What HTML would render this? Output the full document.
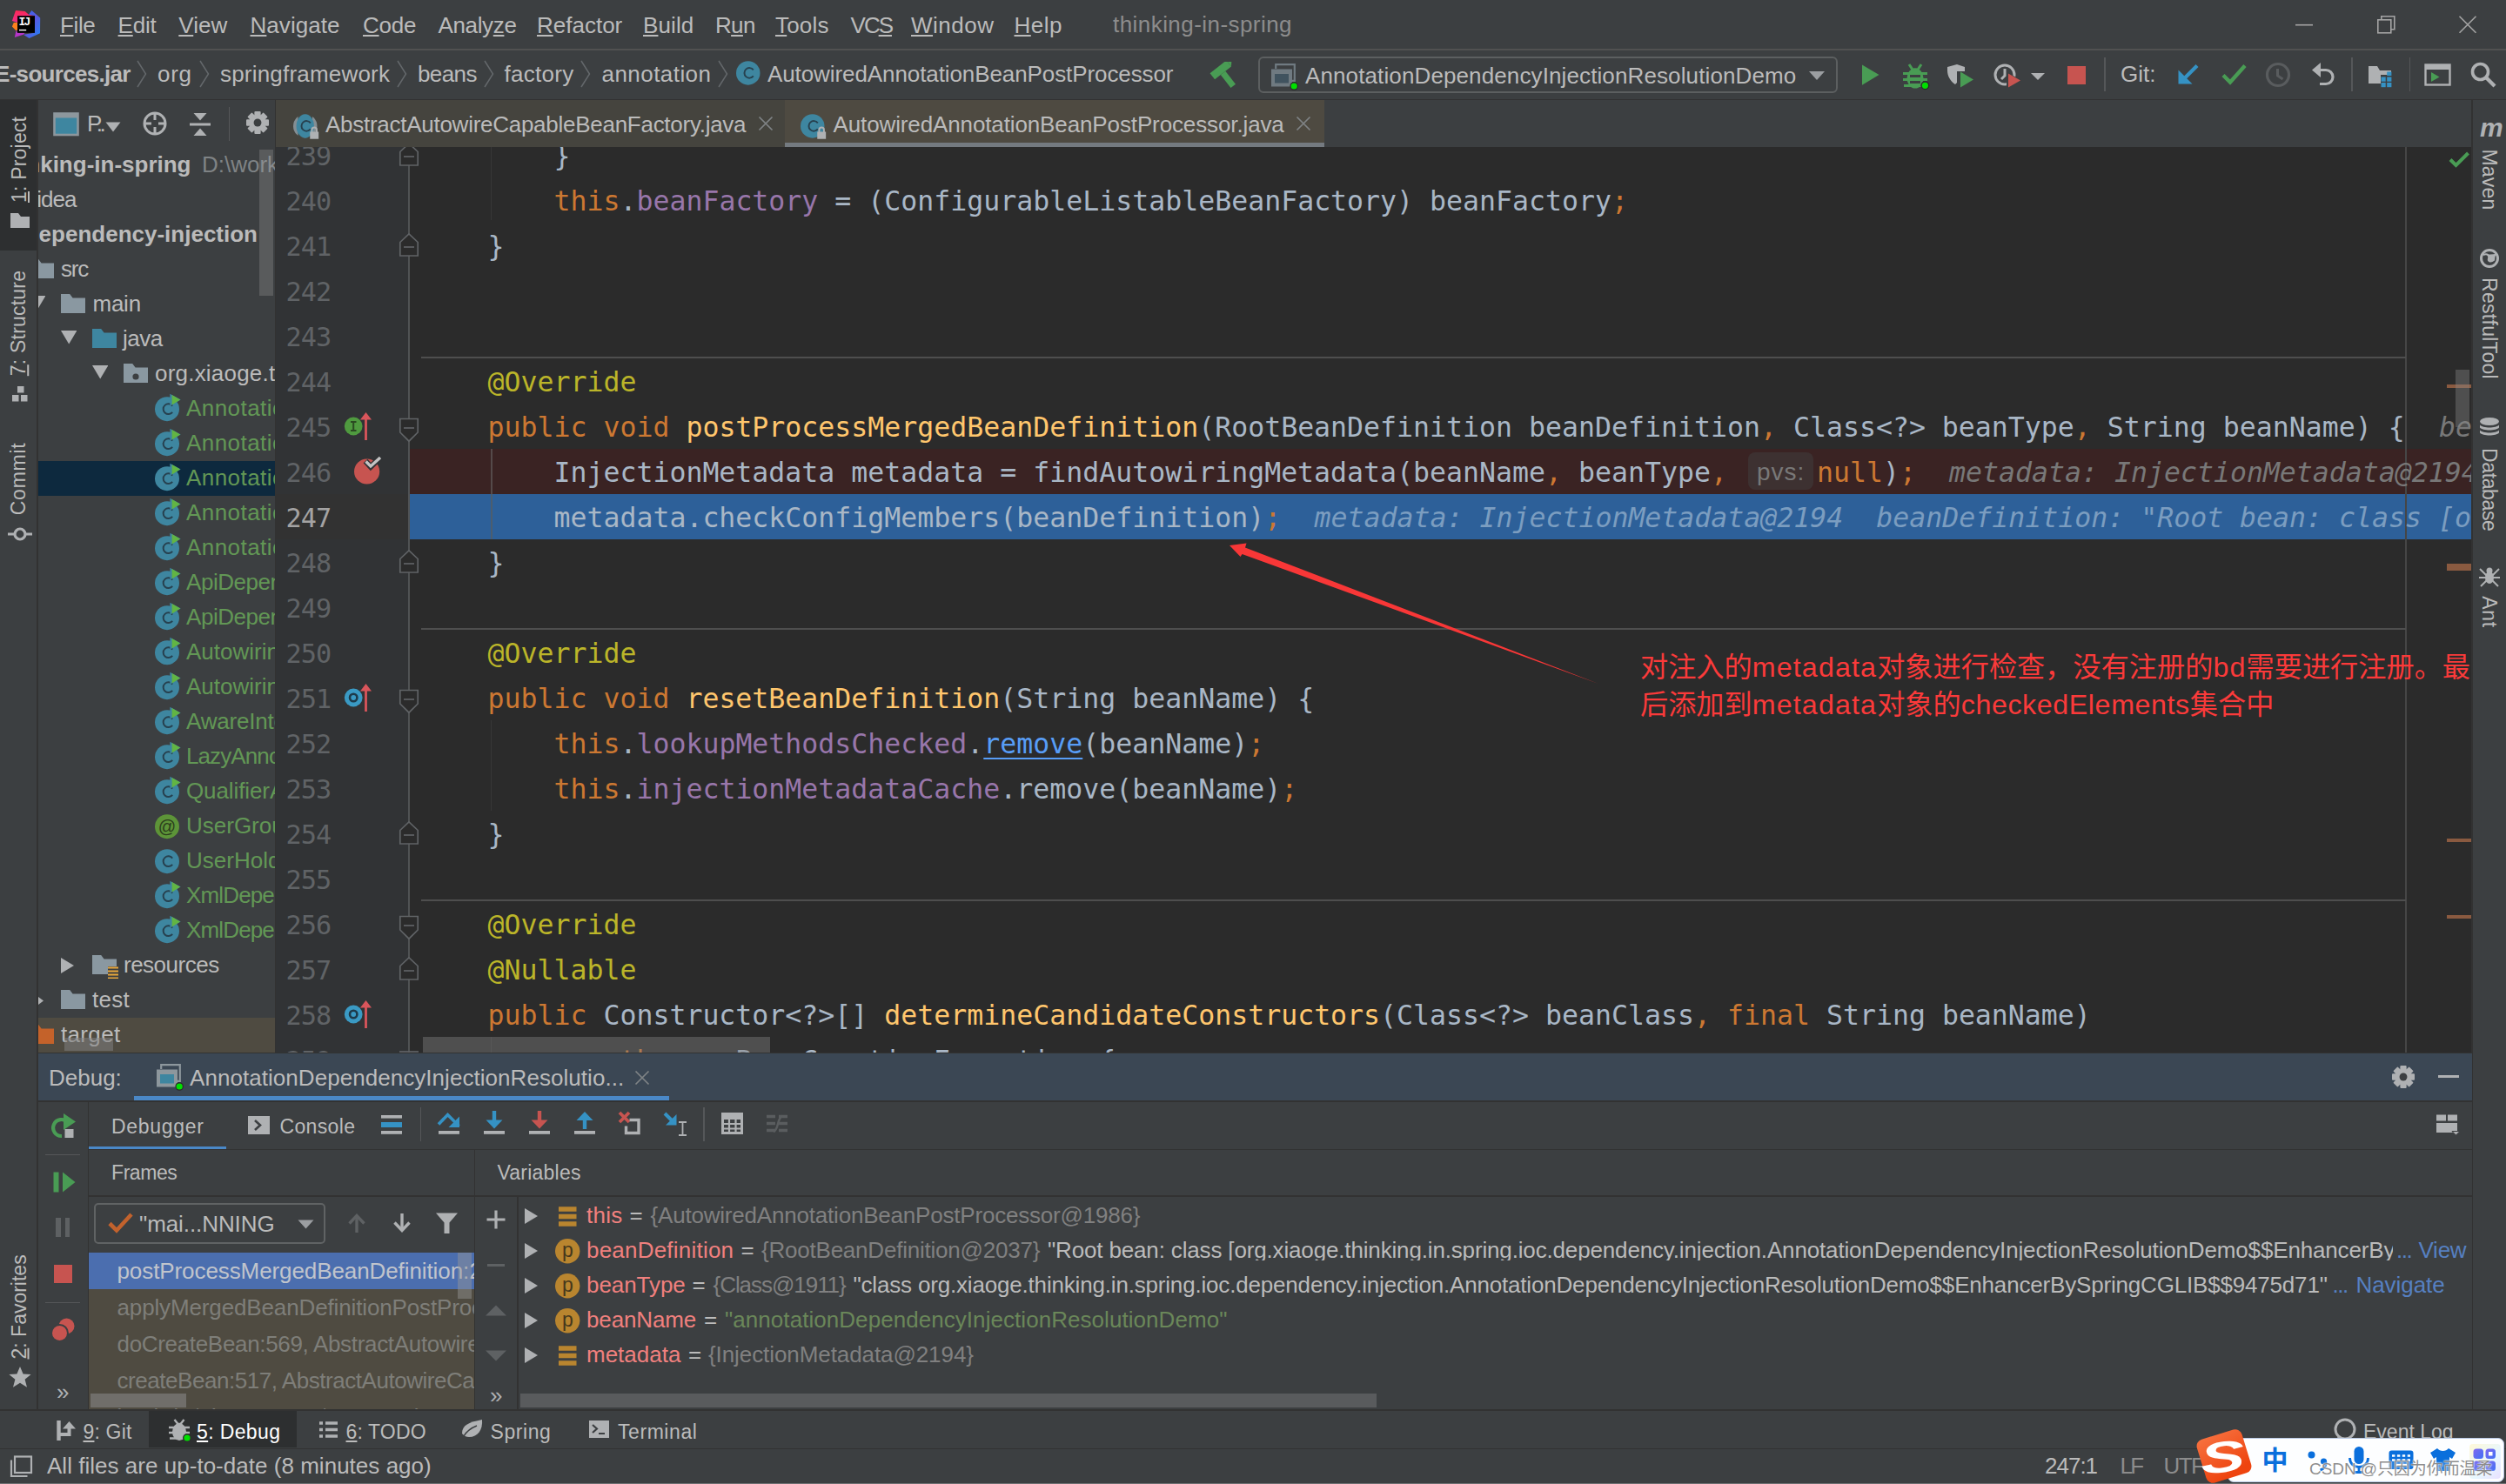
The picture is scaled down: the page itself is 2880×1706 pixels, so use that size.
<!DOCTYPE html>
<html lang="en"><head><meta charset="utf-8"><title>thinking-in-spring</title>
<style>
html,body{margin:0;padding:0}
body{width:2880px;height:1706px;overflow:hidden;background:#3c3f41;position:relative;font-family:"Liberation Sans","Noto Sans CJK SC",sans-serif}
div,svg{position:absolute}
.t{white-space:pre;line-height:1}
.ui{font-family:"Liberation Sans","Noto Sans CJK SC",sans-serif}
.uib{font-family:"Liberation Sans","Noto Sans CJK SC",sans-serif;font-weight:bold}
.mono{font-family:"DejaVu Sans Mono","Liberation Mono",monospace}
.monoi{font-family:"DejaVu Sans Mono","Liberation Mono",monospace;font-style:italic}
.cjk{font-family:"Liberation Sans","Noto Sans CJK SC",sans-serif}
.clip{overflow:hidden}
u{text-decoration-thickness:2px;text-underline-offset:2px}
</style></head>
<body>
<div style="left:0px;top:0px;width:2880px;height:57px;background:#3c3f41;"></div>
<div style="left:0px;top:56px;width:2880px;height:2px;background:#515151;"></div>
<svg style="left:12px;top:10px;" width="36" height="36" viewBox="12 10 36 36"><defs><linearGradient id="lb" x1="0" y1="0" x2="1" y2="1"><stop offset="0" stop-color="#2d6cf0"/><stop offset="0.500" stop-color="#5b57e0"/><stop offset="1" stop-color="#1f84f5"/></linearGradient>
<linearGradient id="lp" x1="0" y1="0" x2="0" y2="1"><stop offset="0" stop-color="#fe2857"/><stop offset="1" stop-color="#e8308a"/></linearGradient></defs>
<polygon points="18,12 28.700,12.900 33,16.800 40,18.200 20.100,25.900 13.900,24" fill="url(#lp)"/>
<polygon points="15.800,26.100 20.100,25.900 20.100,34.500 18.200,35 13.900,30.600" fill="#fc801d"/>
<polygon points="36.400,12 46.200,20.600 46,38.300 33.500,44 26.800,39.700 40,37.800 40,18.200 33,16.800" fill="url(#lb)"/>
<polygon points="18.600,34.800 20.100,37.800 28.700,37.800 26.800,39.700 16.800,43.100" fill="#b535c8"/>
<rect x="20.100" y="18.200" width="19.900" height="19.600" fill="#000"/>
<rect x="22" y="33.900" width="8.200" height="1.400" fill="#fff"/>
<text x="21.600" y="29" font-family="Liberation Mono,monospace" font-weight="bold" font-size="13" letter-spacing="-1.900" fill="#fff">IJ</text></svg>
<div class="t ui" style="top:16.19px;font-size:26px;color:#bbbbbb;left:69.00px;letter-spacing:-0.375px;"><u>F</u>ile</div>
<div class="t ui" style="top:16.19px;font-size:26px;color:#bbbbbb;left:135.60px;letter-spacing:-0.200px;"><u>E</u>dit</div>
<div class="t ui" style="top:16.19px;font-size:26px;color:#bbbbbb;left:205.30px;letter-spacing:0.050px;"><u>V</u>iew</div>
<div class="t ui" style="top:16.19px;font-size:26px;color:#bbbbbb;left:287.50px;letter-spacing:0.062px;"><u>N</u>avigate</div>
<div class="t ui" style="top:16.19px;font-size:26px;color:#bbbbbb;left:417.00px;letter-spacing:-0.250px;"><u>C</u>ode</div>
<div class="t ui" style="top:16.19px;font-size:26px;color:#bbbbbb;left:503.50px;letter-spacing:-0.357px;">Analy<u>z</u>e</div>
<div class="t ui" style="top:16.19px;font-size:26px;color:#bbbbbb;left:617.00px;letter-spacing:0.000px;"><u>R</u>efactor</div>
<div class="t ui" style="top:16.19px;font-size:26px;color:#bbbbbb;left:739.00px;letter-spacing:0.100px;"><u>B</u>uild</div>
<div class="t ui" style="top:16.19px;font-size:26px;color:#bbbbbb;left:822.00px;letter-spacing:-0.667px;">R<u>u</u>n</div>
<div class="t ui" style="top:16.19px;font-size:26px;color:#bbbbbb;left:891.00px;letter-spacing:0.200px;"><u>T</u>ools</div>
<div class="t ui" style="top:16.19px;font-size:26px;color:#bbbbbb;left:977.60px;letter-spacing:-2.033px;">VC<u>S</u></div>
<div class="t ui" style="top:16.19px;font-size:26px;color:#bbbbbb;left:1047.00px;letter-spacing:0.500px;"><u>W</u>indow</div>
<div class="t ui" style="top:16.19px;font-size:26px;color:#bbbbbb;left:1165.50px;letter-spacing:0.500px;"><u>H</u>elp</div>
<div class="t ui" style="top:15.49px;font-size:26px;color:#8c8c8c;left:1279.00px;letter-spacing:0.444px;">thinking-in-spring</div>
<svg style="left:2630px;top:10px;" width="230" height="36" viewBox="0 0 230 36">
<line x1="8" y1="18.7" x2="28" y2="18.7" stroke="#a4a4a4" stroke-width="1.6"/>
<rect x="102.8" y="12.8" width="15" height="15" fill="none" stroke="#a4a4a4" stroke-width="1.6"/>
<path d="M106.8 12.8V8.8h15v15h-4" fill="none" stroke="#a4a4a4" stroke-width="1.6"/>
<path d="M196.5 8.7l19 19M215.5 8.7l-19 19" stroke="#a4a4a4" stroke-width="1.6"/>
</svg>
<div style="left:0px;top:58px;width:2880px;height:57px;background:#3c3f41;"></div>
<div style="left:0px;top:114px;width:2880px;height:1px;background:#323232;"></div>
<div class="t uib" style="top:72.49px;font-size:26px;color:#bbbbbb;left:-6.00px;letter-spacing:-0.692px;">E-sources.jar</div>
<svg style="left:157.2px;top:69px;" width="12" height="32" viewBox="0 0 12 32"><path d="M1 1l9.5 15L1 31" fill="none" stroke="#64686b" stroke-width="1.5"/></svg>
<svg style="left:229px;top:69px;" width="12" height="32" viewBox="0 0 12 32"><path d="M1 1l9.5 15L1 31" fill="none" stroke="#64686b" stroke-width="1.5"/></svg>
<svg style="left:456px;top:69px;" width="12" height="32" viewBox="0 0 12 32"><path d="M1 1l9.5 15L1 31" fill="none" stroke="#64686b" stroke-width="1.5"/></svg>
<svg style="left:556px;top:69px;" width="12" height="32" viewBox="0 0 12 32"><path d="M1 1l9.5 15L1 31" fill="none" stroke="#64686b" stroke-width="1.5"/></svg>
<svg style="left:667px;top:69px;" width="12" height="32" viewBox="0 0 12 32"><path d="M1 1l9.5 15L1 31" fill="none" stroke="#64686b" stroke-width="1.5"/></svg>
<svg style="left:825.3px;top:69px;" width="12" height="32" viewBox="0 0 12 32"><path d="M1 1l9.5 15L1 31" fill="none" stroke="#64686b" stroke-width="1.5"/></svg>
<div class="t ui" style="top:72.49px;font-size:26px;color:#bbbbbb;left:181.00px;letter-spacing:0.667px;">org</div>
<div class="t ui" style="top:72.49px;font-size:26px;color:#bbbbbb;left:253.00px;letter-spacing:0.200px;">springframework</div>
<div class="t ui" style="top:72.49px;font-size:26px;color:#bbbbbb;left:480.00px;letter-spacing:-0.600px;">beans</div>
<div class="t ui" style="top:72.49px;font-size:26px;color:#bbbbbb;left:579.50px;letter-spacing:0.300px;">factory</div>
<div class="t ui" style="top:72.49px;font-size:26px;color:#bbbbbb;left:691.50px;letter-spacing:0.450px;">annotation</div>
<div class="t ui" style="top:72.49px;font-size:26px;color:#bbbbbb;left:882.00px;letter-spacing:-0.092px;">AutowiredAnnotationBeanPostProcessor</div>
<svg style="left:846.3px;top:66.075px;overflow:visible;" width="30.250000000000004" height="33.0" viewBox="0 -4.125 30.250000000000004 33.0"><circle cx="13.75" cy="13.75" r="13.75" fill="#3e86a0"/><path d="M19.8 10.175a5.7749999999999995 5.7749999999999995 0 1 0 0 7.15" fill="none" stroke="#27414f" stroke-width="1.9799999999999998"/></svg>
<svg style="left:1390px;top:71px;" width="36" height="32" viewBox="0 0 36 32"><g transform="rotate(-38 18 16)"><rect x="6" y="3" width="24" height="9" fill="#499c54"/><rect x="14.5" y="12" width="7" height="19" fill="#499c54"/><polygon points="30,3 34,7.5 30,12" fill="#499c54"/></g></svg>
<div style="left:1446px;top:65px;width:666px;height:42px;border:2px solid #5c5f60;border-radius:6px;box-sizing:border-box"></div>
<svg style="left:1461px;top:73px;" width="33" height="32" viewBox="0 0 33 32"><path d="M5.2 6V1.200h21.600v18.600h-3" fill="none" stroke="#6f7a81" stroke-width="2.2"/>
<rect x="0" y="6.500" width="24" height="20" fill="#6f7a81"/><rect x="4" y="12" width="16" height="10.500" fill="#40535f"/>
<circle cx="26.200" cy="26" r="4.800" fill="#2b2b2b"/><circle cx="26.200" cy="26" r="3.600" fill="#00e000"/></svg>
<div class="t ui" style="top:74.49px;font-size:26px;color:#bbbbbb;left:1500.00px;letter-spacing:0.116px;">AnnotationDependencyInjectionResolutionDemo</div>
<svg style="left:2078px;top:81px;" width="20" height="12" viewBox="0 0 20 12"><polygon points="1,1 19,1 10,11" fill="#9b9ea1"/></svg>
<svg style="left:2139px;top:73px;" width="22" height="26" viewBox="0 0 22 26"><polygon points="1,1.5 20.5,13 1,24.8" fill="#499c54"/></svg>
<svg style="left:2185px;top:71px;" width="34" height="33" viewBox="0 0 34 33">
<g fill="#499c54"><ellipse cx="16" cy="19" rx="9.5" ry="11.5"/><path d="M9 3l4 6 h6l4-6" fill="none" stroke="#499c54" stroke-width="3"/>
<rect x="2" y="12" width="28" height="3"/><rect x="2" y="19" width="28" height="3"/><rect x="3" y="26" width="26" height="3"/></g>
<rect x="10" y="15" width="12" height="3" fill="#3c3f41"/><rect x="10" y="22" width="12" height="3" fill="#3c3f41"/>
<circle cx="27.4" cy="27.3" r="5" fill="#2b2b2b"/><circle cx="27.4" cy="27.3" r="3.6" fill="#00e000"/></svg>
<svg style="left:2236px;top:73px;" width="34" height="30" viewBox="0 0 34 30"><path d="M2 4 L13 1 L22 4 V9 H13 V22 L11 24 C5 20 2 14 2 8Z" fill="#afb1b3"/><polygon points="17,9.5 32,18.5 17,27.5" fill="#499c54"/></svg>
<svg style="left:2290px;top:71px;" width="34" height="32" viewBox="0 0 34 32"><circle cx="14" cy="15" r="11" fill="none" stroke="#afb1b3" stroke-width="3"/><path d="M14 8v8l-4 4" fill="none" stroke="#afb1b3" stroke-width="3"/><polygon points="16,12 33,21 16,30" fill="#3c3f41"/><polygon points="18,13.5 32,21.5 18,29.5" fill="#c75450"/></svg>
<svg style="left:2333px;top:83px;" width="18" height="10" viewBox="0 0 18 10"><polygon points="1,1 17,1 9,9" fill="#afb1b3"/></svg>
<div style="left:2376px;top:76px;width:20.5px;height:20.5px;background:#c75450;"></div>
<div style="left:2418px;top:66px;width:1.5px;height:39px;background:#555759;"></div>
<div class="t ui" style="top:72.49px;font-size:26px;color:#bbbbbb;left:2437.00px;letter-spacing:0.000px;">Git:</div>
<svg style="left:2502px;top:73px;" width="26" height="25" viewBox="0 0 26 25"><path d="M23 2.5L5 20.5" stroke="#3592c4" stroke-width="4.2"/><polygon points="1.5,7.5 1.5,23.5 17.5,23.5" fill="#3592c4"/></svg>
<svg style="left:2552px;top:72px;" width="31" height="26" viewBox="0 0 31 26"><path d="M3 14.5l8 8L28 3.5" fill="none" stroke="#499c54" stroke-width="4.4"/></svg>
<svg style="left:2602px;top:70px;" width="32" height="32" viewBox="0 0 32 32"><circle cx="16" cy="16" r="12.5" fill="none" stroke="#595c5e" stroke-width="3.2"/><path d="M15.5 9v8l6 4" fill="none" stroke="#595c5e" stroke-width="3"/></svg>
<svg style="left:2656px;top:70px;" width="30" height="30" viewBox="0 0 30 30"><path d="M5 10.5h12a8 8 0 0 1 0 16h-7" fill="none" stroke="#afb1b3" stroke-width="3.2"/><polygon points="1,10.5 11,2 11,19" fill="#afb1b3"/></svg>
<div style="left:2702px;top:66px;width:1.5px;height:39px;background:#555759;"></div>
<svg style="left:2720px;top:74px;" width="32" height="28" viewBox="0 0 32 28"><path d="M2 2h10l3 5h13v5H16v10H2z" fill="#afb1b3"/><rect x="16.5" y="14.5" width="5.2" height="5.2" fill="#3592c4"/><rect x="23.2" y="14.5" width="5.2" height="5.2" fill="#3592c4"/><rect x="16.5" y="21" width="5.2" height="5.2" fill="#3592c4"/><rect x="23.2" y="21" width="5.2" height="5.2" fill="#3592c4"/><rect x="23.2" y="8.5" width="5.2" height="4.5" fill="#3592c4"/></svg>
<div style="left:2768.5px;top:66px;width:1.5px;height:39px;background:#555759;"></div>
<svg style="left:2786px;top:73px;" width="32" height="27" viewBox="0 0 32 27"><rect x="1.5" y="1.5" width="28" height="23" fill="none" stroke="#afb1b3" stroke-width="2.4"/><rect x="1.5" y="1.5" width="28" height="5.5" fill="#afb1b3"/><polygon points="8,10 17.5,15.5 8,21" fill="#499c54"/></svg>
<svg style="left:2838px;top:70px;" width="32" height="32" viewBox="0 0 32 32"><circle cx="12.5" cy="12.5" r="9" fill="none" stroke="#afb1b3" stroke-width="3.6"/><path d="M19 19l10 10" stroke="#afb1b3" stroke-width="4.2"/></svg>
<div style="left:43.5px;top:115px;width:2797px;height:54px;background:#3c3f41;"></div>
<svg style="left:61px;top:129px;" width="31" height="28" viewBox="0 0 31 28"><rect x="1.5" y="1.5" width="27" height="24.5" fill="#3e86a0" stroke="#8d979d" stroke-width="2.6"/><rect x="1" y="1" width="28" height="5.5" fill="#8d979d"/></svg>
<div class="t ui" style="top:128.99px;font-size:26px;color:#bbbbbb;left:100.00px;letter-spacing:-3.333px;">P..</div>
<svg style="left:121px;top:140px;" width="18" height="12" viewBox="0 0 18 12"><polygon points="0.5,0.5 17.5,0.5 9,11.5" fill="#afb1b3"/></svg>
<svg style="left:163px;top:127px;" width="30" height="30" viewBox="0 0 30 30"><circle cx="15" cy="15" r="12" fill="none" stroke="#afb1b3" stroke-width="3"/><path d="M15 3v8M15 19v8M3 15h8M19 15h8" stroke="#afb1b3" stroke-width="3"/></svg>
<svg style="left:217px;top:129px;" width="26" height="28" viewBox="0 0 26 28"><path d="M1 14h24" stroke="#afb1b3" stroke-width="3"/><polygon points="5.500,1 20.500,1 13,9.5" fill="#afb1b3"/><polygon points="5.500,27 20.500,27 13,18.5" fill="#afb1b3"/></svg>
<div style="left:262.5px;top:122.5px;width:1.5px;height:39px;background:#555759;"></div>
<svg style="left:283px;top:128px;" width="26" height="26" viewBox="0 0 26 26"><rect x="9.36" y="0" width="7.280000000000001" height="26" rx="1" fill="#afb1b3" transform="rotate(0 13.0 13.0)"/><rect x="9.36" y="0" width="7.280000000000001" height="26" rx="1" fill="#afb1b3" transform="rotate(45 13.0 13.0)"/><rect x="9.36" y="0" width="7.280000000000001" height="26" rx="1" fill="#afb1b3" transform="rotate(90 13.0 13.0)"/><rect x="9.36" y="0" width="7.280000000000001" height="26" rx="1" fill="#afb1b3" transform="rotate(135 13.0 13.0)"/><circle cx="13.0" cy="13.0" r="9.36" fill="#afb1b3"/><circle cx="13.0" cy="13.0" r="4.42" fill="#3c3f41"/></svg>
<div style="left:317px;top:115px;width:585px;height:54px;background:#45443e;"></div>
<div style="left:902px;top:115px;width:620px;height:54px;background:#4e4a41;"></div>
<div style="left:902px;top:164px;width:620px;height:5px;background:#747a80;"></div>
<div style="left:316px;top:115px;width:1px;height:54px;background:#323232;"></div>
<svg style="left:337px;top:126.875px;overflow:visible;" width="30.250000000000004" height="33.0" viewBox="0 -4.125 30.250000000000004 33.0"><circle cx="13.75" cy="13.75" r="13.75" fill="#9aa7b0" opacity=".75"/><rect x="5.5" y="0" width="16.5" height="27.5" fill="#45453f"/><ellipse cx="13.75" cy="13.75" rx="10.175" ry="13.75" fill="#3e86a0"/><path d="M19.8 10.175a5.7749999999999995 5.7749999999999995 0 1 0 0 7.15" fill="none" stroke="#27414f" stroke-width="1.9799999999999998"/><rect x="19.25" y="20.35" width="9.9" height="8.25" fill="#afb1b3"/><path d="M21.45 20.9v-2.75a2.75 2.75 0 0 1 5.5 0v2.75" fill="none" stroke="#afb1b3" stroke-width="1.9250000000000003"/></svg>
<div class="t ui" style="top:130.49px;font-size:26px;color:#bbbbbb;left:374.00px;letter-spacing:-0.269px;">AbstractAutowireCapableBeanFactory.java</div>
<svg style="left:871px;top:133px;" width="18" height="18" viewBox="0 0 18 18"><path d="M1.5 1.5l15 15M16.500 1.5l-15 15" stroke="#7f8385" stroke-width="1.7"/></svg>
<svg style="left:920px;top:126.875px;overflow:visible;" width="30.250000000000004" height="33.0" viewBox="0 -4.125 30.250000000000004 33.0"><circle cx="13.75" cy="13.75" r="13.75" fill="#3e86a0"/><path d="M19.8 10.175a5.7749999999999995 5.7749999999999995 0 1 0 0 7.15" fill="none" stroke="#27414f" stroke-width="1.9799999999999998"/><rect x="19.25" y="20.35" width="9.9" height="8.25" fill="#afb1b3"/><path d="M21.45 20.9v-2.75a2.75 2.75 0 0 1 5.5 0v2.75" fill="none" stroke="#afb1b3" stroke-width="1.9250000000000003"/></svg>
<div class="t ui" style="top:130.49px;font-size:26px;color:#bbbbbb;left:957.50px;letter-spacing:-0.122px;">AutowiredAnnotationBeanPostProcessor.java</div>
<svg style="left:1489px;top:133px;" width="18" height="18" viewBox="0 0 18 18"><path d="M1.5 1.5l15 15M16.500 1.5l-15 15" stroke="#7f8385" stroke-width="1.7"/></svg>
<div style="left:0px;top:115px;width:43px;height:1506px;background:#3c3f41;"></div>
<div style="left:42px;top:115px;width:1.5px;height:1506px;background:#323232;"></div>
<div style="left:0px;top:115px;width:42px;height:173px;background:#2d2f30;"></div>
<div class="t ui" style="left:-27.50px;top:171.50px;width:99.00px;height:23px;font-size:23px;color:#bbbbbb;transform:rotate(-90deg);text-align:center;"><span style="letter-spacing:0.200px;"><u>1</u>: Project</span></div>
<svg style="left:11px;top:244px;" width="24" height="19" viewBox="0 0 24 19"><path d="M1 1h9l3 4h10v13H1z" fill="#afb1b3"/></svg>
<div class="t ui" style="left:-38.75px;top:359.75px;width:121.50px;height:23px;font-size:23px;color:#bbbbbb;transform:rotate(-90deg);text-align:center;"><span style="letter-spacing:0.208px;"><u>7</u>: Structure</span></div>
<svg style="left:13px;top:443px;" width="20" height="20" viewBox="0 0 20 20"><rect x="7" y="1" width="7.5" height="7.5" fill="#afb1b3"/><rect x="1" y="11" width="7.5" height="7.5" fill="#afb1b3"/><rect x="11" y="11" width="7.5" height="7.5" fill="#afb1b3"/></svg>
<div class="t ui" style="left:-19.75px;top:538.75px;width:83.50px;height:23px;font-size:23px;color:#bbbbbb;transform:rotate(-90deg);text-align:center;"><span style="letter-spacing:0.750px;">Commit</span></div>
<svg style="left:9px;top:604px;" width="28" height="20" viewBox="0 0 28 20"><circle cx="14" cy="10" r="6" fill="none" stroke="#afb1b3" stroke-width="3.2"/><path d="M0 10h7M21 10h7" stroke="#afb1b3" stroke-width="3.2"/></svg>
<div class="t ui" style="left:-38.00px;top:1490.50px;width:120.00px;height:23px;font-size:23px;color:#bbbbbb;transform:rotate(-90deg);text-align:center;"><span style="letter-spacing:0.000px;"><u>2</u>: Favorites</span></div>
<svg style="left:10px;top:1570px;" width="26" height="26" viewBox="0 0 26 26"><polygon points="13,1 16.6,9.6 25.6,10 18.6,15.8 21,24.8 13,19.8 5,24.8 7.4,15.8 0.4,10 9.4,9.6" fill="#afb1b3"/></svg>
<div style="left:2840px;top:115px;width:40px;height:1506px;background:#3c3f41;"></div>
<div style="left:2840px;top:115px;width:1.5px;height:1506px;background:#323232;"></div>
<div class="t uib" style="top:131.60px;font-size:30px;color:#afb1b3;left:2850.00px;font-style:italic;">m</div>
<div class="t ui" style="left:2825.00px;top:194.50px;width:70.00px;height:23px;font-size:23px;color:#bbbbbb;transform:rotate(90deg);text-align:center;"><span style="letter-spacing:0.200px;">Maven</span></div>
<svg style="left:2849px;top:285px;" width="24" height="24" viewBox="0 0 24 24"><circle cx="12" cy="12" r="9.5" fill="none" stroke="#afb1b3" stroke-width="3"/><path d="M5 8c5-2 7 1 6 4s2 5 6 2c1-3-1-6 3-7" fill="#afb1b3" stroke="#afb1b3" stroke-width="2"/></svg>
<div class="t ui" style="left:2801.50px;top:366.00px;width:117.00px;height:23px;font-size:23px;color:#bbbbbb;transform:rotate(90deg);text-align:center;"><span style="letter-spacing:0.273px;">RestfulTool</span></div>
<svg style="left:2848px;top:479px;" width="26" height="26" viewBox="0 0 26 26"><ellipse cx="13" cy="5.5" rx="11" ry="4.5" fill="#afb1b3"/><path d="M2 9.5c3 4 19 4 22 0v3c-3 4-19 4-22 0zM2 15.500c3 4 19 4 22 0v3c-3 4-19 4-22 0z" fill="#afb1b3"/></svg>
<div class="t ui" style="left:2812.50px;top:551.00px;width:95.00px;height:23px;font-size:23px;color:#bbbbbb;transform:rotate(90deg);text-align:center;"><span style="letter-spacing:-0.375px;">Database</span></div>
<svg style="left:2848px;top:650px;" width="26" height="26" viewBox="0 0 26 26"><ellipse cx="13" cy="14" rx="5" ry="7" fill="#afb1b3"/><circle cx="13" cy="6" r="3.5" fill="#afb1b3"/><path d="M2 4l8 8M24 4l-8 8M1 14h24M3 24l8-8M23 24l-8-8" stroke="#afb1b3" stroke-width="2"/></svg>
<div class="t ui" style="left:2841.50px;top:691.50px;width:37.00px;height:23px;font-size:23px;color:#bbbbbb;transform:rotate(90deg);text-align:center;"><span style="letter-spacing:0.667px;">Ant</span></div>
<div class="clip" style="left:43.5px;top:169px;width:272.5px;height:1041px;background:#3c3f41">
<div style="left:0px;top:361px;width:273px;height:40px;background:#0d293e;"></div>
<div style="left:0px;top:1001px;width:273px;height:40px;background:#4f4b41;"></div>
<div class="t uib" style="top:6.99px;font-size:26px;color:#bbbbbb;right:96.50px;">nking-in-spring</div>
<div class="t ui" style="top:6.99px;font-size:26px;color:#7f8385;left:188.50px;">D:\workspace</div>
<div class="t ui" style="top:46.99px;font-size:26px;color:#bbbbbb;right:228.50px;letter-spacing:-1px;">.idea</div>
<div class="t uib" style="top:86.99px;font-size:26px;color:#bbbbbb;right:20.00px;">dependency-injection</div>
<svg style="left:-9.5px;top:129px;" width="28.3" height="22.2" viewBox="0 0 28.3 22.2"><path d="M0 0h10.188l3.396 4.44h14.716000000000001v17.76H0z" fill="#8a98a1"/></svg>
<div class="t ui" style="top:126.99px;font-size:26px;color:#bbbbbb;left:26.50px;letter-spacing:-1.167px;">src</div>
<svg style="left:-9.5px;top:171px;" width="18.4" height="15.6" viewBox="0 0 18.4 15.6"><polygon points="0,0 18.400,0 9.200,15.600" fill="#afb1b3"/></svg>
<svg style="left:26.5px;top:169px;" width="28.3" height="22.2" viewBox="0 0 28.3 22.2"><path d="M0 0h10.188l3.396 4.44h14.716000000000001v17.76H0z" fill="#8a98a1"/></svg>
<div class="t ui" style="top:166.99px;font-size:26px;color:#bbbbbb;left:63.00px;letter-spacing:-0.250px;">main</div>
<svg style="left:26.5px;top:211px;" width="18.4" height="15.6" viewBox="0 0 18.4 15.6"><polygon points="0,0 18.400,0 9.200,15.600" fill="#afb1b3"/></svg>
<svg style="left:62.5px;top:209px;" width="28.3" height="22.2" viewBox="0 0 28.3 22.2"><path d="M0 0h10.188l3.396 4.44h14.716000000000001v17.76H0z" fill="#3e86a0"/></svg>
<div class="t ui" style="top:206.99px;font-size:26px;color:#bbbbbb;left:97.50px;letter-spacing:-0.500px;">java</div>
<svg style="left:62.5px;top:251px;" width="18.4" height="15.6" viewBox="0 0 18.4 15.6"><polygon points="0,0 18.400,0 9.200,15.600" fill="#afb1b3"/></svg>
<svg style="left:98.5px;top:249px;" width="28.3" height="22.2" viewBox="0 0 28.3 22.2"><path d="M0 0h10.188l3.396 4.44h14.716000000000001v17.76H0z" fill="#8a98a1"/></svg>
<svg style="left:108.5px;top:260px;" width="8" height="8" viewBox="0 0 8 8"><circle cx="4" cy="4" r="3.6" fill="#3c3f41"/></svg>
<div class="t ui" style="top:246.99px;font-size:26px;color:#bbbbbb;left:134.50px;letter-spacing:0.207px;">org.xiaoge.thinking.in.spring</div>
<svg style="left:134.5px;top:282.8px;overflow:visible;" width="30.800000000000004" height="33.6" viewBox="0 -4.2 30.800000000000004 33.6"><circle cx="14.0" cy="14.0" r="14.0" fill="#3e86a0"/><path d="M20.16 10.36a5.88 5.88 0 1 0 0 7.28" fill="none" stroke="#27414f" stroke-width="2.016"/><polygon points="17.36,-3.36 29.68,3.36 17.36,10.64" fill="#3e86a0" stroke="#3c3f41" stroke-width="0"/><polygon points="19.599999999999998,-2.24 29.12,3.36 19.599999999999998,9.24" fill="#62b543"/></svg>
<div class="t ui" style="top:286.99px;font-size:26px;color:#629755;left:170.50px;letter-spacing:0.45px;">AnnotationDependencyConstructorInjectionDemo</div>
<svg style="left:134.5px;top:322.8px;overflow:visible;" width="30.800000000000004" height="33.6" viewBox="0 -4.2 30.800000000000004 33.6"><circle cx="14.0" cy="14.0" r="14.0" fill="#3e86a0"/><path d="M20.16 10.36a5.88 5.88 0 1 0 0 7.28" fill="none" stroke="#27414f" stroke-width="2.016"/><polygon points="17.36,-3.36 29.68,3.36 17.36,10.64" fill="#3e86a0" stroke="#3c3f41" stroke-width="0"/><polygon points="19.599999999999998,-2.24 29.12,3.36 19.599999999999998,9.24" fill="#62b543"/></svg>
<div class="t ui" style="top:326.99px;font-size:26px;color:#629755;left:170.50px;letter-spacing:0.45px;">AnnotationDependencyFieldInjectionDemo</div>
<svg style="left:134.5px;top:362.8px;overflow:visible;" width="30.800000000000004" height="33.6" viewBox="0 -4.2 30.800000000000004 33.6"><circle cx="14.0" cy="14.0" r="14.0" fill="#3e86a0"/><path d="M20.16 10.36a5.88 5.88 0 1 0 0 7.28" fill="none" stroke="#27414f" stroke-width="2.016"/><polygon points="17.36,-3.36 29.68,3.36 17.36,10.64" fill="#3e86a0" stroke="#3c3f41" stroke-width="0"/><polygon points="19.599999999999998,-2.24 29.12,3.36 19.599999999999998,9.24" fill="#62b543"/></svg>
<div class="t ui" style="top:366.99px;font-size:26px;color:#629755;left:170.50px;letter-spacing:0.45px;">AnnotationDependencyInjectionResolutionDemo</div>
<svg style="left:134.5px;top:402.8px;overflow:visible;" width="30.800000000000004" height="33.6" viewBox="0 -4.2 30.800000000000004 33.6"><circle cx="14.0" cy="14.0" r="14.0" fill="#3e86a0"/><path d="M20.16 10.36a5.88 5.88 0 1 0 0 7.28" fill="none" stroke="#27414f" stroke-width="2.016"/><polygon points="17.36,-3.36 29.68,3.36 17.36,10.64" fill="#3e86a0" stroke="#3c3f41" stroke-width="0"/><polygon points="19.599999999999998,-2.24 29.12,3.36 19.599999999999998,9.24" fill="#62b543"/></svg>
<div class="t ui" style="top:406.99px;font-size:26px;color:#629755;left:170.50px;letter-spacing:0.45px;">AnnotationDependencyMethodInjectionDemo</div>
<svg style="left:134.5px;top:442.8px;overflow:visible;" width="30.800000000000004" height="33.6" viewBox="0 -4.2 30.800000000000004 33.6"><circle cx="14.0" cy="14.0" r="14.0" fill="#3e86a0"/><path d="M20.16 10.36a5.88 5.88 0 1 0 0 7.28" fill="none" stroke="#27414f" stroke-width="2.016"/><polygon points="17.36,-3.36 29.68,3.36 17.36,10.64" fill="#3e86a0" stroke="#3c3f41" stroke-width="0"/><polygon points="19.599999999999998,-2.24 29.12,3.36 19.599999999999998,9.24" fill="#62b543"/></svg>
<div class="t ui" style="top:446.99px;font-size:26px;color:#629755;left:170.50px;letter-spacing:0.45px;">AnnotationDependencySetterInjectionDemo</div>
<svg style="left:134.5px;top:482.8px;overflow:visible;" width="30.800000000000004" height="33.6" viewBox="0 -4.2 30.800000000000004 33.6"><circle cx="14.0" cy="14.0" r="14.0" fill="#3e86a0"/><path d="M20.16 10.36a5.88 5.88 0 1 0 0 7.28" fill="none" stroke="#27414f" stroke-width="2.016"/><polygon points="17.36,-3.36 29.68,3.36 17.36,10.64" fill="#3e86a0" stroke="#3c3f41" stroke-width="0"/><polygon points="19.599999999999998,-2.24 29.12,3.36 19.599999999999998,9.24" fill="#62b543"/></svg>
<div class="t ui" style="top:486.99px;font-size:26px;color:#629755;left:170.50px;letter-spacing:-0.45px;">ApiDependencyConstructorInjectionDemo</div>
<svg style="left:134.5px;top:522.8px;overflow:visible;" width="30.800000000000004" height="33.6" viewBox="0 -4.2 30.800000000000004 33.6"><circle cx="14.0" cy="14.0" r="14.0" fill="#3e86a0"/><path d="M20.16 10.36a5.88 5.88 0 1 0 0 7.28" fill="none" stroke="#27414f" stroke-width="2.016"/><polygon points="17.36,-3.36 29.68,3.36 17.36,10.64" fill="#3e86a0" stroke="#3c3f41" stroke-width="0"/><polygon points="19.599999999999998,-2.24 29.12,3.36 19.599999999999998,9.24" fill="#62b543"/></svg>
<div class="t ui" style="top:526.99px;font-size:26px;color:#629755;left:170.50px;letter-spacing:-0.45px;">ApiDependencySetterInjectionDemo</div>
<svg style="left:134.5px;top:562.8px;overflow:visible;" width="30.800000000000004" height="33.6" viewBox="0 -4.2 30.800000000000004 33.6"><circle cx="14.0" cy="14.0" r="14.0" fill="#3e86a0"/><path d="M20.16 10.36a5.88 5.88 0 1 0 0 7.28" fill="none" stroke="#27414f" stroke-width="2.016"/><polygon points="17.36,-3.36 29.68,3.36 17.36,10.64" fill="#3e86a0" stroke="#3c3f41" stroke-width="0"/><polygon points="19.599999999999998,-2.24 29.12,3.36 19.599999999999998,9.24" fill="#62b543"/></svg>
<div class="t ui" style="top:566.99px;font-size:26px;color:#629755;left:170.50px;letter-spacing:0px;">AutowiringByNameDependencySetterInjectionDemo</div>
<svg style="left:134.5px;top:602.8px;overflow:visible;" width="30.800000000000004" height="33.6" viewBox="0 -4.2 30.800000000000004 33.6"><circle cx="14.0" cy="14.0" r="14.0" fill="#3e86a0"/><path d="M20.16 10.36a5.88 5.88 0 1 0 0 7.28" fill="none" stroke="#27414f" stroke-width="2.016"/><polygon points="17.36,-3.36 29.68,3.36 17.36,10.64" fill="#3e86a0" stroke="#3c3f41" stroke-width="0"/><polygon points="19.599999999999998,-2.24 29.12,3.36 19.599999999999998,9.24" fill="#62b543"/></svg>
<div class="t ui" style="top:606.99px;font-size:26px;color:#629755;left:170.50px;letter-spacing:0px;">AutowiringConstructorDependencyInjectionDemo</div>
<svg style="left:134.5px;top:642.8px;overflow:visible;" width="30.800000000000004" height="33.6" viewBox="0 -4.2 30.800000000000004 33.6"><circle cx="14.0" cy="14.0" r="14.0" fill="#3e86a0"/><path d="M20.16 10.36a5.88 5.88 0 1 0 0 7.28" fill="none" stroke="#27414f" stroke-width="2.016"/><polygon points="17.36,-3.36 29.68,3.36 17.36,10.64" fill="#3e86a0" stroke="#3c3f41" stroke-width="0"/><polygon points="19.599999999999998,-2.24 29.12,3.36 19.599999999999998,9.24" fill="#62b543"/></svg>
<div class="t ui" style="top:646.99px;font-size:26px;color:#629755;left:170.50px;letter-spacing:-0.2px;">AwareInterfaceDependencyInjectionDemo</div>
<svg style="left:134.5px;top:682.8px;overflow:visible;" width="30.800000000000004" height="33.6" viewBox="0 -4.2 30.800000000000004 33.6"><circle cx="14.0" cy="14.0" r="14.0" fill="#3e86a0"/><path d="M20.16 10.36a5.88 5.88 0 1 0 0 7.28" fill="none" stroke="#27414f" stroke-width="2.016"/><polygon points="17.36,-3.36 29.68,3.36 17.36,10.64" fill="#3e86a0" stroke="#3c3f41" stroke-width="0"/><polygon points="19.599999999999998,-2.24 29.12,3.36 19.599999999999998,9.24" fill="#62b543"/></svg>
<div class="t ui" style="top:686.99px;font-size:26px;color:#629755;left:170.50px;letter-spacing:-0.9px;">LazyAnnotationDependencyInjectionDemo</div>
<svg style="left:134.5px;top:722.8px;overflow:visible;" width="30.800000000000004" height="33.6" viewBox="0 -4.2 30.800000000000004 33.6"><circle cx="14.0" cy="14.0" r="14.0" fill="#3e86a0"/><path d="M20.16 10.36a5.88 5.88 0 1 0 0 7.28" fill="none" stroke="#27414f" stroke-width="2.016"/><polygon points="17.36,-3.36 29.68,3.36 17.36,10.64" fill="#3e86a0" stroke="#3c3f41" stroke-width="0"/><polygon points="19.599999999999998,-2.24 29.12,3.36 19.599999999999998,9.24" fill="#62b543"/></svg>
<div class="t ui" style="top:726.99px;font-size:26px;color:#629755;left:170.50px;letter-spacing:-0.1px;">QualifierAnnotationDependencyInjectionDemo</div>
<svg style="left:134.5px;top:762.8px;overflow:visible;" width="30.800000000000004" height="33.6" viewBox="0 -4.2 30.800000000000004 33.6"><circle cx="14.0" cy="14.0" r="14.0" fill="#5d9438"/><text x="14.0" y="21.28" text-anchor="middle" font-family="Liberation Sans,sans-serif" font-size="20.16" fill="#2b3d1c">@</text></svg>
<div class="t ui" style="top:766.99px;font-size:26px;color:#629755;left:170.50px;letter-spacing:0px;">UserGroup</div>
<svg style="left:134.5px;top:802.8px;overflow:visible;" width="30.800000000000004" height="33.6" viewBox="0 -4.2 30.800000000000004 33.6"><circle cx="14.0" cy="14.0" r="14.0" fill="#3e86a0"/><path d="M20.16 10.36a5.88 5.88 0 1 0 0 7.28" fill="none" stroke="#27414f" stroke-width="2.016"/></svg>
<div class="t ui" style="top:806.99px;font-size:26px;color:#629755;left:170.50px;letter-spacing:0px;">UserHolder</div>
<svg style="left:134.5px;top:842.8px;overflow:visible;" width="30.800000000000004" height="33.6" viewBox="0 -4.2 30.800000000000004 33.6"><circle cx="14.0" cy="14.0" r="14.0" fill="#3e86a0"/><path d="M20.16 10.36a5.88 5.88 0 1 0 0 7.28" fill="none" stroke="#27414f" stroke-width="2.016"/><polygon points="17.36,-3.36 29.68,3.36 17.36,10.64" fill="#3e86a0" stroke="#3c3f41" stroke-width="0"/><polygon points="19.599999999999998,-2.24 29.12,3.36 19.599999999999998,9.24" fill="#62b543"/></svg>
<div class="t ui" style="top:846.99px;font-size:26px;color:#629755;left:170.50px;letter-spacing:-0.85px;">XmlDependencyConstructorInjectionDemo</div>
<svg style="left:134.5px;top:882.8px;overflow:visible;" width="30.800000000000004" height="33.6" viewBox="0 -4.2 30.800000000000004 33.6"><circle cx="14.0" cy="14.0" r="14.0" fill="#3e86a0"/><path d="M20.16 10.36a5.88 5.88 0 1 0 0 7.28" fill="none" stroke="#27414f" stroke-width="2.016"/><polygon points="17.36,-3.36 29.68,3.36 17.36,10.64" fill="#3e86a0" stroke="#3c3f41" stroke-width="0"/><polygon points="19.599999999999998,-2.24 29.12,3.36 19.599999999999998,9.24" fill="#62b543"/></svg>
<div class="t ui" style="top:886.99px;font-size:26px;color:#629755;left:170.50px;letter-spacing:-0.85px;">XmlDependencySetterInjectionDemo</div>
<svg style="left:26.5px;top:932px;" width="15" height="18" viewBox="0 0 15 18"><polygon points="0,0 15,9 0,18" fill="#afb1b3"/></svg>
<svg style="left:62.5px;top:929px;" width="28.3" height="22.2" viewBox="0 0 28.3 22.2"><path d="M0 0h10.188l3.396 4.44h14.716000000000001v17.76H0z" fill="#8a98a1"/></svg>
<svg style="left:80.5px;top:942px;background:#3c3f41;" width="13" height="14" viewBox="0 0 13 14"><path d="M0 1.5h12M0 5.500h12M0 9.5h12M0 13.500h12" stroke="#e8a73c" stroke-width="2.2"/></svg>
<div class="t ui" style="top:926.99px;font-size:26px;color:#bbbbbb;left:98.50px;letter-spacing:-0.500px;">resources</div>
<svg style="left:0.5px;top:977px;" width="7" height="9" viewBox="0 0 7 9"><polygon points="0,0 6,4.5 0,9" fill="#afb1b3"/></svg>
<svg style="left:26.5px;top:969px;" width="28.3" height="22.2" viewBox="0 0 28.3 22.2"><path d="M0 0h10.188l3.396 4.44h14.716000000000001v17.76H0z" fill="#8a98a1"/></svg>
<div class="t ui" style="top:966.99px;font-size:26px;color:#bbbbbb;left:62.50px;letter-spacing:0.250px;">test</div>
<svg style="left:-9.5px;top:1009px;" width="28.3" height="22.2" viewBox="0 0 28.3 22.2"><path d="M0 0h10.188l3.396 4.44h14.716000000000001v17.76H0z" fill="#c4622a"/></svg>
<div class="t ui" style="top:1006.99px;font-size:26px;color:#bbbbbb;left:26.50px;letter-spacing:0.333px;">target</div>
<div style="left:254.5px;top:3px;width:16px;height:167.5px;background:rgba(166,166,166,0.28);"></div>
<div style="left:30.5px;top:1024px;width:56px;height:14.5px;background:rgba(128,128,128,0.55);"></div>
</div>
<div style="left:43.5px;top:1209.5px;width:2797px;height:1.5px;background:#323232;"></div>
<div class="clip" style="left:316px;top:169px;width:2524px;height:1040.5px;background:#2b2b2b">
<div style="left:0px;top:0px;width:154px;height:1041px;background:#313335;"></div>
<div style="left:0px;top:0px;width:1px;height:1041px;background:#323232;"></div>
<div style="left:1px;top:399px;width:153px;height:52px;background:#323232;"></div>
<div style="left:155px;top:347px;width:2369px;height:52px;background:#3a2323;"></div>
<div style="left:155px;top:399px;width:2369px;height:52px;background:#2d6099;"></div>
<div style="left:2448px;top:0px;width:2px;height:1041px;background:#464646;"></div>
<div style="left:168px;top:241px;width:2281px;height:2px;background:#4e4e4e;"></div>
<div style="left:168px;top:553px;width:2281px;height:2px;background:#4e4e4e;"></div>
<div style="left:168px;top:865px;width:2281px;height:2px;background:#4e4e4e;"></div>
<div style="left:247.70000000000005px;top:0px;width:1.6px;height:84px;background:#373737;"></div>
<div style="left:247.5px;top:347px;width:2px;height:52px;background:#554a4a;"></div>
<div style="left:247.5px;top:399px;width:2px;height:52px;background:#4c5d6e;"></div>
<div style="left:247.70000000000005px;top:659px;width:1.6px;height:104px;background:#373737;"></div>
<div style="left:247.70000000000005px;top:1023px;width:1.6px;height:52px;background:#373737;"></div>
<svg style="left:142px;top:0" width="24" height="1041" viewBox="0 0 24 1041"><path d="M12 0V1041" stroke="#555759" stroke-width="1.8"/><polygon points="1.8,21 1.8,5.5 12,-4.199999999999999 22.2,5.5 22.2,21" fill="#2b2b2b" stroke="#606366" stroke-width="1.7"/><path d="M6 11h12" stroke="#606366" stroke-width="1.7"/><polygon points="1.8,125 1.8,109.5 12,99.8 22.2,109.5 22.2,125" fill="#2b2b2b" stroke="#606366" stroke-width="1.7"/><path d="M6 115h12" stroke="#606366" stroke-width="1.7"/><polygon points="1.8,312.5 22.2,312.5 22.2,328 12,338.2 1.8,328" fill="#2b2b2b" stroke="#606366" stroke-width="1.7"/><path d="M6 323h12" stroke="#606366" stroke-width="1.7"/><polygon points="1.8,489 1.8,473.5 12,463.8 22.2,473.5 22.2,489" fill="#2b2b2b" stroke="#606366" stroke-width="1.7"/><path d="M6 479h12" stroke="#606366" stroke-width="1.7"/><polygon points="1.8,624.5 22.2,624.5 22.2,640 12,650.2 1.8,640" fill="#2b2b2b" stroke="#606366" stroke-width="1.7"/><path d="M6 635h12" stroke="#606366" stroke-width="1.7"/><polygon points="1.8,801 1.8,785.5 12,775.8 22.2,785.5 22.2,801" fill="#2b2b2b" stroke="#606366" stroke-width="1.7"/><path d="M6 791h12" stroke="#606366" stroke-width="1.7"/><polygon points="1.8,884.5 22.2,884.5 22.2,900 12,910.2 1.8,900" fill="#2b2b2b" stroke="#606366" stroke-width="1.7"/><path d="M6 895h12" stroke="#606366" stroke-width="1.7"/><polygon points="1.8,957 1.8,941.5 12,931.8 22.2,941.5 22.2,957" fill="#2b2b2b" stroke="#606366" stroke-width="1.7"/><path d="M6 947h12" stroke="#606366" stroke-width="1.7"/><path d="M1 1040h22" stroke="#606366" stroke-width="1.7"/></svg>
<div class="t mono" style="left:12.50px;top:-3.55px;font-size:30.2px;color:#606366;letter-spacing:-0.9px">239</div>
<div class="t mono" style="left:12.50px;top:48.45px;font-size:30.2px;color:#606366;letter-spacing:-0.9px">240</div>
<div class="t mono" style="left:12.50px;top:100.45px;font-size:30.2px;color:#606366;letter-spacing:-0.9px">241</div>
<div class="t mono" style="left:12.50px;top:152.45px;font-size:30.2px;color:#606366;letter-spacing:-0.9px">242</div>
<div class="t mono" style="left:12.50px;top:204.45px;font-size:30.2px;color:#606366;letter-spacing:-0.9px">243</div>
<div class="t mono" style="left:12.50px;top:256.45px;font-size:30.2px;color:#606366;letter-spacing:-0.9px">244</div>
<div class="t mono" style="left:12.50px;top:308.45px;font-size:30.2px;color:#606366;letter-spacing:-0.9px">245</div>
<div class="t mono" style="left:12.50px;top:360.45px;font-size:30.2px;color:#606366;letter-spacing:-0.9px">246</div>
<div class="t mono" style="left:12.50px;top:412.45px;font-size:30.2px;color:#a4a3a3;letter-spacing:-0.9px">247</div>
<div class="t mono" style="left:12.50px;top:464.45px;font-size:30.2px;color:#606366;letter-spacing:-0.9px">248</div>
<div class="t mono" style="left:12.50px;top:516.45px;font-size:30.2px;color:#606366;letter-spacing:-0.9px">249</div>
<div class="t mono" style="left:12.50px;top:568.45px;font-size:30.2px;color:#606366;letter-spacing:-0.9px">250</div>
<div class="t mono" style="left:12.50px;top:620.45px;font-size:30.2px;color:#606366;letter-spacing:-0.9px">251</div>
<div class="t mono" style="left:12.50px;top:672.45px;font-size:30.2px;color:#606366;letter-spacing:-0.9px">252</div>
<div class="t mono" style="left:12.50px;top:724.45px;font-size:30.2px;color:#606366;letter-spacing:-0.9px">253</div>
<div class="t mono" style="left:12.50px;top:776.45px;font-size:30.2px;color:#606366;letter-spacing:-0.9px">254</div>
<div class="t mono" style="left:12.50px;top:828.45px;font-size:30.2px;color:#606366;letter-spacing:-0.9px">255</div>
<div class="t mono" style="left:12.50px;top:880.45px;font-size:30.2px;color:#606366;letter-spacing:-0.9px">256</div>
<div class="t mono" style="left:12.50px;top:932.45px;font-size:30.2px;color:#606366;letter-spacing:-0.9px">257</div>
<div class="t mono" style="left:12.50px;top:984.45px;font-size:30.2px;color:#606366;letter-spacing:-0.9px">258</div>
<div class="t mono" style="left:12.50px;top:1036.45px;font-size:30.2px;color:#606366;letter-spacing:-0.9px">259</div>
<svg style="left:0;top:0" width="154" height="1041" viewBox="0 0 154 1041"><circle cx="90.2" cy="321" r="10.4" fill="#59a869" opacity=".0"/><circle cx="90.2" cy="321" r="10.4" fill="#4f9a3f"/><path d="M87 316h6.500M87 326h6.500M90.2 316v10" stroke="#2b4a22" stroke-width="2"/><path d="M104.5 337V313" stroke="#d9555b" stroke-width="2.8"/><polygon points="98.0,313.5 104.5,305 111.0,313.5" fill="#d9555b"/><circle cx="90.2" cy="633" r="10.4" fill="#3a9ac4"/><circle cx="90.2" cy="633" r="4.2" fill="none" stroke="#1d3a4a" stroke-width="2.6"/><path d="M104.5 649V625" stroke="#d9555b" stroke-width="2.8"/><polygon points="98.0,625.5 104.5,617 111.0,625.5" fill="#d9555b"/><circle cx="90.2" cy="997" r="10.4" fill="#3a9ac4"/><circle cx="90.2" cy="997" r="4.2" fill="none" stroke="#1d3a4a" stroke-width="2.6"/><path d="M104.5 1013V989" stroke="#d9555b" stroke-width="2.8"/><polygon points="98.0,989.5 104.5,981 111.0,989.5" fill="#d9555b"/><circle cx="105.6" cy="373" r="14.6" fill="#c75450"/><path d="M104 361l6 6.500L121.500 356.5" fill="none" stroke="#313335" stroke-width="6.5"/><path d="M104.500 361.5l5.500 5.500L121 357" fill="none" stroke="#c4c4c4" stroke-width="3.4"/></svg>
<div class="t mono" style="left:168.50px;top:-4.70px;font-size:31.56px;color:#a9b7c6">        }</div>
<div class="t mono" style="left:168.50px;top:47.30px;font-size:31.56px;color:#a9b7c6"><span style="color:#cc7832">        this</span>.<span style="color:#9876aa">beanFactory</span> = (ConfigurableListableBeanFactory) beanFactory<span style="color:#cc7832">;</span></div>
<div class="t mono" style="left:168.50px;top:99.30px;font-size:31.56px;color:#a9b7c6">    }</div>
<div class="t mono" style="left:168.50px;top:255.30px;font-size:31.56px;color:#a9b7c6"><span style="color:#bbb529">    @Override</span></div>
<div class="t mono" style="left:168.50px;top:307.30px;font-size:31.56px;color:#a9b7c6"><span style="color:#cc7832">    public void </span><span style="color:#ffc66d">postProcessMergedBeanDefinition</span>(RootBeanDefinition beanDefinition<span style="color:#cc7832">,</span> Class&lt;?&gt; beanType<span style="color:#cc7832">,</span> String beanName) {</div>
<div class="t monoi" style="left:2487.00px;top:307.30px;font-size:31.56px;color:#a9b7c6"><span style="color:#787878">beanDefinition: "Root bean: class [org.xiaoge</span></div>
<div class="t mono" style="left:168.50px;top:359.30px;font-size:31.56px;color:#a9b7c6">        InjectionMetadata metadata = findAutowiringMetadata(beanName<span style="color:#cc7832">,</span> beanType<span style="color:#cc7832">,</span></div>
<div style="left:1692.5px;top:351px;width:75.500px;height:43px;border-radius:8px;background:#3d3131"></div>
<div class="t ui" style="top:359.80px;font-size:28px;color:#787878;left:1703.00px;letter-spacing:1.000px;">pvs:</div>
<div class="t mono" style="left:1772.00px;top:359.30px;font-size:31.56px;color:#a9b7c6"><span style="color:#cc7832">null</span>)<span style="color:#cc7832">;</span></div>
<div class="t monoi" style="left:1924.00px;top:359.30px;font-size:31.56px;color:#a9b7c6"><span style="color:#787878">metadata<span>:</span> InjectionMetadata@2194</span></div>
<div class="t mono" style="left:168.50px;top:411.30px;font-size:31.56px;color:#a9b7c6">        metadata.checkConfigMembers(beanDefinition)<span style="color:#cc7832">;</span></div>
<div class="t monoi" style="left:1194.50px;top:411.30px;font-size:31.56px;color:#a9b7c6"><span style="color:#7b9dc0">metadata<span>:</span> InjectionMetadata@2194  beanDefinition: "Root bean: class [org.xiaoge.thinking</span></div>
<div class="t mono" style="left:168.50px;top:463.30px;font-size:31.56px;color:#a9b7c6">    }</div>
<div class="t mono" style="left:168.50px;top:567.30px;font-size:31.56px;color:#a9b7c6"><span style="color:#bbb529">    @Override</span></div>
<div class="t mono" style="left:168.50px;top:619.30px;font-size:31.56px;color:#a9b7c6"><span style="color:#cc7832">    public void </span><span style="color:#ffc66d">resetBeanDefinition</span>(String beanName) {</div>
<div class="t mono" style="left:168.50px;top:671.30px;font-size:31.56px;color:#a9b7c6"><span style="color:#cc7832">        this</span>.<span style="color:#9876aa">lookupMethodsChecked</span>.<span style="color:#589df6;text-decoration:underline;text-decoration-thickness:2px;text-underline-offset:5px">remove</span>(beanName)<span style="color:#cc7832">;</span></div>
<div class="t mono" style="left:168.50px;top:723.30px;font-size:31.56px;color:#a9b7c6"><span style="color:#cc7832">        this</span>.<span style="color:#9876aa">injectionMetadataCache</span>.remove(beanName)<span style="color:#cc7832">;</span></div>
<div class="t mono" style="left:168.50px;top:775.30px;font-size:31.56px;color:#a9b7c6">    }</div>
<div class="t mono" style="left:168.50px;top:879.30px;font-size:31.56px;color:#a9b7c6"><span style="color:#bbb529">    @Override</span></div>
<div class="t mono" style="left:168.50px;top:931.30px;font-size:31.56px;color:#a9b7c6"><span style="color:#bbb529">    @Nullable</span></div>
<div class="t mono" style="left:168.50px;top:983.30px;font-size:31.56px;color:#a9b7c6"><span style="color:#cc7832">    public </span>Constructor&lt;?&gt;[] <span style="color:#ffc66d">determineCandidateConstructors</span>(Class&lt;?&gt; beanClass<span style="color:#cc7832">, final </span>String beanName)</div>
<div class="t mono" style="left:168.50px;top:1035.30px;font-size:31.56px;color:#a9b7c6"><span style="color:#cc7832">            throws </span>BeanCreationException {</div>
<div style="left:170px;top:1023px;width:399px;height:17.5px;background:rgba(128,128,128,0.42);"></div>
<div style="left:2496px;top:272.5px;width:28px;height:4px;background:#8a5a40;"></div>
<div style="left:2496px;top:478.5px;width:28px;height:8px;background:#8a5a40;"></div>
<div style="left:2496px;top:795px;width:28px;height:4px;background:#8a5a40;"></div>
<div style="left:2496px;top:883px;width:28px;height:4px;background:#8a5a40;"></div>
<div style="left:2506px;top:256px;width:16px;height:66px;background:rgba(140,140,140,0.38);"></div>
<svg style="left:2498px;top:4px;" width="25" height="20" viewBox="0 0 25 20"><path d="M2 10.500l6.500 6.500L22.500 3" fill="none" stroke="#499c54" stroke-width="4"/></svg>
<svg style="left:0;top:0" width="2524" height="1041" viewBox="316 169 2524 1041"><polygon points="1413,627 1432.5,624.5 1431,629.500 1837,786 1427.5,637 1425.500,640" fill="#f83737"/></svg>
<div class="t cjk" style="left:1569px;top:577.2px;font-size:32.2px;line-height:42.4px;color:#fa3a3a">对注入的<span style="letter-spacing:1.15px">metadata</span>对象进行检查，没有注册的<span style="letter-spacing:1.15px">bd</span>需要进行注册。最<br>后添加到<span style="letter-spacing:1.15px">metadata</span>对象的<span style="letter-spacing:0.6px">checkedElements</span>集合中</div>
</div>
<div style="left:43.5px;top:1211px;width:2797px;height:54px;background:#3b4754;"></div>
<div class="t ui" style="top:1225.99px;font-size:26px;color:#bbbbbb;left:56.00px;letter-spacing:0.000px;">Debug:</div>
<svg style="left:180px;top:1223px;" width="33" height="32" viewBox="0 0 33 32"><path d="M5.2 6V1.200h21.600v18.600h-3" fill="none" stroke="#8d979d" stroke-width="2.2"/>
<rect x="0" y="6.500" width="24" height="20" fill="#8d979d"/><rect x="4" y="12" width="16" height="10.500" fill="#3e86a0"/>
<circle cx="26.200" cy="26" r="4.800" fill="#2b2b2b"/><circle cx="26.200" cy="26" r="3.600" fill="#00e000"/></svg>
<div class="t ui" style="top:1225.99px;font-size:26px;color:#bbbbbb;left:218.00px;letter-spacing:0.049px;">AnnotationDependencyInjectionResolutio...</div>
<svg style="left:729px;top:1230px;" width="18" height="18" viewBox="0 0 18 18"><path d="M1.5 1.5l15 15M16.500 1.5l-15 15" stroke="#7f8385" stroke-width="1.7"/></svg>
<div style="left:154px;top:1260px;width:614.5px;height:5.5px;background:#4a88c7;"></div>
<svg style="left:2749px;top:1225px;" width="26" height="26" viewBox="0 0 26 26"><rect x="9.36" y="0" width="7.280000000000001" height="26" rx="1" fill="#afb1b3" transform="rotate(0 13.0 13.0)"/><rect x="9.36" y="0" width="7.280000000000001" height="26" rx="1" fill="#afb1b3" transform="rotate(45 13.0 13.0)"/><rect x="9.36" y="0" width="7.280000000000001" height="26" rx="1" fill="#afb1b3" transform="rotate(90 13.0 13.0)"/><rect x="9.36" y="0" width="7.280000000000001" height="26" rx="1" fill="#afb1b3" transform="rotate(135 13.0 13.0)"/><circle cx="13.0" cy="13.0" r="9.36" fill="#afb1b3"/><circle cx="13.0" cy="13.0" r="4.42" fill="#3c3f41"/></svg>
<div style="left:2802px;top:1236px;width:24px;height:3px;background:#afb1b3;"></div>
<div style="left:43.5px;top:1265px;width:2797px;height:1.5px;background:#323232;"></div>
<div style="left:43.5px;top:1266.5px;width:2797px;height:354px;background:#3c3f41;"></div>
<div style="left:100.5px;top:1266.5px;width:1.5px;height:354px;background:#323232;"></div>
<svg style="left:59px;top:1279px;" width="30" height="31" viewBox="0 0 30 31"><path d="M21 11.500A9.500 9.500 0 1 0 14 27" fill="none" stroke="#499c54" stroke-width="4.2" transform="translate(-2 0)"/><polygon points="14,1 28,10.500 14,20" fill="#499c54"/><rect x="15.500" y="19" width="10" height="10" fill="#afb1b3"/></svg>
<div style="left:52px;top:1326.5px;width:40px;height:1.5px;background:#555759;"></div>
<svg style="left:61px;top:1347px;" width="26" height="24" viewBox="0 0 26 24"><rect x="0.500" y="0.5" width="6" height="23" fill="#499c54"/><polygon points="11,0.500 25.500,12 11,23.500" fill="#499c54"/></svg>
<div style="left:64px;top:1400px;width:5.5px;height:22px;background:#5e6163;"></div>
<div style="left:74.5px;top:1400px;width:5.5px;height:22px;background:#5e6163;"></div>
<div style="left:62px;top:1454px;width:20.5px;height:20.5px;background:#c75450;"></div>
<div style="left:52px;top:1496.5px;width:40px;height:1.5px;background:#555759;"></div>
<svg style="left:59px;top:1515px;" width="28" height="27" viewBox="0 0 28 27"><circle cx="17.500" cy="9.5" r="9" fill="#c75450"/><circle cx="9.500" cy="17.500" r="10.500" fill="#3c3f41"/><circle cx="9.500" cy="17.500" r="8.5" fill="#c75450"/></svg>
<div class="t ui" style="top:1586.99px;font-size:26px;color:#afb1b3;left:65.00px;">»</div>
<div class="t ui" style="top:1283.83px;font-size:23px;color:#bbbbbb;left:128.00px;letter-spacing:0.688px;">Debugger</div>
<div style="left:102px;top:1317.5px;width:158px;height:4px;background:#4a88c7;"></div>
<svg style="left:285px;top:1283px;" width="26" height="22" viewBox="0 0 26 22"><rect width="25" height="21" fill="#afb1b3"/><path d="M8 5l6 5.500-6 5.500" fill="none" stroke="#3c3f41" stroke-width="2.6"/></svg>
<div class="t ui" style="top:1283.83px;font-size:23px;color:#bbbbbb;left:321.50px;letter-spacing:0.357px;">Console</div>
<svg style="left:438px;top:1281px;" width="25" height="24" viewBox="0 0 25 24"><rect y="1" width="24" height="3.6" fill="#afb1b3"/><rect y="9" width="24" height="6" fill="#3592c4"/><rect y="19" width="24" height="3.8" fill="#afb1b3"/></svg>
<div style="left:482.5px;top:1272.5px;width:1.5px;height:39px;background:#555759;"></div>
<svg style="left:502px;top:1278px;" width="28" height="27" viewBox="0 0 28 27"><path d="M2 14.500l10.500-11 13 13" fill="none" stroke="#3592c4" stroke-width="3.6"/><polygon points="26,5.500 26,18 13.500,18" fill="#3592c4"/><rect x="2" y="22" width="24" height="3.8" fill="#afb1b3"/></svg>
<svg style="left:555px;top:1276px;" width="27" height="29" viewBox="0 0 27 29"><path d="M13 1v14" stroke="#3592c4" stroke-width="4.4"/><polygon points="3.500,11.500 22.500,11.500 13,21.500" fill="#3592c4"/><rect x="1" y="24" width="24" height="3.8" fill="#afb1b3"/></svg>
<svg style="left:607px;top:1276px;" width="27" height="29" viewBox="0 0 27 29"><path d="M13 1v14" stroke="#c75450" stroke-width="4.4"/><polygon points="3.500,11.500 22.500,11.500 13,21.500" fill="#c75450"/><rect x="1" y="24" width="24" height="3.8" fill="#afb1b3"/></svg>
<svg style="left:659px;top:1276px;" width="27" height="29" viewBox="0 0 27 29"><path d="M13 22V9" stroke="#3592c4" stroke-width="4.4"/><polygon points="3.500,12 22.500,12 13,2" fill="#3592c4"/><rect x="1" y="24" width="24" height="3.8" fill="#afb1b3"/></svg>
<svg style="left:710px;top:1277px;" width="28" height="29" viewBox="0 0 28 29"><path d="M2 2l11 11M13 2L2 13" stroke="#c75450" stroke-width="3.8"/><path d="M13.500 10.500H24v15H9.500v-8" fill="none" stroke="#afb1b3" stroke-width="3.4"/></svg>
<svg style="left:762px;top:1278px;" width="30" height="30" viewBox="0 0 30 30"><path d="M2 2l11 11" stroke="#3592c4" stroke-width="4"/><polygon points="15.500,3 15.500,15.500 3,15.500" fill="#3592c4"/><path d="M18 12h9M18 27h9M22.500 12v15" stroke="#afb1b3" stroke-width="1.8"/></svg>
<div style="left:808px;top:1272.5px;width:1.5px;height:39px;background:#555759;"></div>
<svg style="left:829px;top:1279px;" width="26" height="26" viewBox="0 0 26 26"><rect x="1.500" y="1.5" width="22" height="22" fill="none" stroke="#afb1b3" stroke-width="3"/><rect x="1" y="1" width="23" height="7" fill="#afb1b3"/><path d="M9 8v16M16.500 8v16M2 13h22M2 18.500h22" stroke="#afb1b3" stroke-width="2.2"/></svg>
<svg style="left:881px;top:1281px;" width="26" height="22" viewBox="0 0 26 22"><path d="M0 2.500h24M0 10.500h24M0 18.500h24" stroke="#5a5d5f" stroke-width="3.6" stroke-dasharray="10 4"/><path d="M8 20c6-2 4-16 10-18" fill="none" stroke="#5a5d5f" stroke-width="2.5"/></svg>
<svg style="left:2799px;top:1281px;" width="28" height="24" viewBox="0 0 28 24"><rect x="1" y="0.500" width="11" height="7" fill="#afb1b3"/><rect x="14" y="0.500" width="11" height="7" fill="#afb1b3"/><rect x="1" y="10" width="24" height="11" fill="#afb1b3"/><polygon points="19,19.500 28,19.500 23.500,24" fill="#afb1b3" stroke="#3c3f41" stroke-width="1"/></svg>
<div style="left:102px;top:1320.5px;width:2738.5px;height:1.5px;background:#323232;"></div>
<div class="t ui" style="top:1337.13px;font-size:23px;color:#bbbbbb;left:128.00px;letter-spacing:-0.417px;">Frames</div>
<div class="t ui" style="top:1337.13px;font-size:23px;color:#bbbbbb;left:571.50px;letter-spacing:0.222px;">Variables</div>
<div style="left:102px;top:1374px;width:2738.5px;height:1.5px;background:#323232;"></div>
<div style="left:544.5px;top:1322px;width:1.5px;height:298.5px;background:#323232;"></div>
<div style="left:108px;top:1382.500px;width:266px;height:47px;border:2px solid #606364;border-radius:5px;box-sizing:border-box"></div>
<svg style="left:124px;top:1393px;" width="30" height="25" viewBox="0 0 30 25"><path d="M2 13.500l8 8L27 3" fill="none" stroke="#c2622d" stroke-width="4.6"/></svg>
<div class="t ui" style="top:1393.99px;font-size:26px;color:#bbbbbb;left:160.00px;letter-spacing:-0.083px;">"mai...NNING</div>
<svg style="left:341.5px;top:1402px;" width="19" height="11" viewBox="0 0 19 11"><polygon points="0.500,0.5 18.500,0.5 9.500,10.500" fill="#9b9ea1"/></svg>
<svg style="left:400px;top:1394px;" width="20" height="24" viewBox="0 0 20 24"><path d="M10 23V5" stroke="#5e6163" stroke-width="3.4"/><path d="M1.500 12.500L10 3.500l8.500 9" fill="none" stroke="#5e6163" stroke-width="3.4"/></svg>
<svg style="left:452px;top:1394px;" width="20" height="24" viewBox="0 0 20 24"><path d="M10 1v18" stroke="#afb1b3" stroke-width="3.4"/><path d="M1.500 11.500L10 20.500l8.500-9" fill="none" stroke="#afb1b3" stroke-width="3.4"/></svg>
<svg style="left:501px;top:1394px;" width="26" height="25" viewBox="0 0 26 25"><polygon points="0,0.500 25,0.5 15.500,11.500 15.500,24 9.500,24 9.500,11.500" fill="#afb1b3"/></svg>
<div class="clip" style="left:102px;top:1440px;width:442.5px;height:180.5px;background:#4f4b41">
<div style="left:0px;top:0px;width:442.5px;height:42px;background:#4b6eaf;"></div>
<div class="t ui" style="top:7.99px;font-size:26px;color:#c0c4cc;left:32.50px;letter-spacing:-0.091px;">postProcessMergedBeanDefinition:2</div>
<div class="t ui" style="top:49.99px;font-size:26px;color:#7e7e79;left:32.50px;letter-spacing:-0.136px;">applyMergedBeanDefinitionPostProc</div>
<div class="t ui" style="top:91.99px;font-size:26px;color:#7e7e79;left:32.50px;letter-spacing:-0.324px;">doCreateBean:569, AbstractAutowire</div>
<div class="t ui" style="top:133.99px;font-size:26px;color:#7e7e79;left:32.50px;letter-spacing:-0.456px;">createBean:517, AbstractAutowireCa</div>
<div class="t ui" style="top:175.99px;font-size:26px;color:#7e7e79;left:32.50px;">lambda$doGetBean$0:323, AbstractBe</div>
<div style="left:423.5px;top:0px;width:16.5px;height:53px;background:rgba(150,150,150,0.45);"></div>
<div style="left:2px;top:162px;width:110px;height:15.5px;background:rgba(140,140,140,0.55);"></div>
</div>
<div style="left:594px;top:1375.5px;width:1.5px;height:245px;background:#323232;"></div>
<svg style="left:559px;top:1391px;" width="22" height="22" viewBox="0 0 22 22"><path d="M11 0.500v21M0.500 11h21" stroke="#afb1b3" stroke-width="3.2"/></svg>
<div style="left:560px;top:1452.5px;width:20px;height:3px;background:#5e6163;"></div>
<svg style="left:558px;top:1500px;" width="24" height="13" viewBox="0 0 24 13"><polygon points="0,12.500 24,12.500 12,0.500" fill="#5e6163"/></svg>
<svg style="left:558px;top:1552px;" width="24" height="13" viewBox="0 0 24 13"><polygon points="0,0.500 24,0.5 12,12.500" fill="#5e6163"/></svg>
<div class="t ui" style="top:1590.99px;font-size:26px;color:#afb1b3;left:563.00px;">»</div>
<svg style="left:602.5px;top:1389px;" width="15" height="18" viewBox="0 0 15 18"><polygon points="0,0 15,9 0,18" fill="#afb1b3"/></svg>
<svg style="left:602.5px;top:1429px;" width="15" height="18" viewBox="0 0 15 18"><polygon points="0,0 15,9 0,18" fill="#afb1b3"/></svg>
<svg style="left:602.5px;top:1469px;" width="15" height="18" viewBox="0 0 15 18"><polygon points="0,0 15,9 0,18" fill="#afb1b3"/></svg>
<svg style="left:602.5px;top:1509px;" width="15" height="18" viewBox="0 0 15 18"><polygon points="0,0 15,9 0,18" fill="#afb1b3"/></svg>
<svg style="left:602.5px;top:1549px;" width="15" height="18" viewBox="0 0 15 18"><polygon points="0,0 15,9 0,18" fill="#afb1b3"/></svg>
<svg style="left:641.5px;top:1386.5px;" width="21" height="24" viewBox="0 0 21 24"><path d="M0 3h20.500M0 11.500h20.500M0 20h20.500" stroke="#b9852f" stroke-width="5.6"/></svg>
<svg style="left:637.5px;top:1424px;" width="29" height="29" viewBox="0 0 29 29"><circle cx="14.200" cy="14.200" r="14.200" fill="#b9852f"/><text x="14.400" y="20.500" text-anchor="middle" font-family="Liberation Sans,sans-serif" font-size="23" fill="#46381c">p</text></svg>
<svg style="left:637.5px;top:1464px;" width="29" height="29" viewBox="0 0 29 29"><circle cx="14.200" cy="14.200" r="14.200" fill="#b9852f"/><text x="14.400" y="20.500" text-anchor="middle" font-family="Liberation Sans,sans-serif" font-size="23" fill="#46381c">p</text></svg>
<svg style="left:637.5px;top:1504px;" width="29" height="29" viewBox="0 0 29 29"><circle cx="14.200" cy="14.200" r="14.200" fill="#b9852f"/><text x="14.400" y="20.500" text-anchor="middle" font-family="Liberation Sans,sans-serif" font-size="23" fill="#46381c">p</text></svg>
<svg style="left:641.5px;top:1546.5px;" width="21" height="24" viewBox="0 0 21 24"><path d="M0 3h20.500M0 11.500h20.500M0 20h20.500" stroke="#b9852f" stroke-width="5.6"/></svg>
<div class="t ui" style="top:1383.99px;font-size:26px;color:#f0807e;left:674.00px;letter-spacing:0.250px;">this</div>
<div class="t ui" style="top:1383.99px;font-size:26px;color:#bbbbbb;left:723.50px;">=</div>
<div class="t ui" style="top:1383.99px;font-size:26px;color:#808080;left:747.50px;letter-spacing:-0.198px;">{AutowiredAnnotationBeanPostProcessor@1986}</div>
<div class="t ui" style="top:1423.99px;font-size:26px;color:#f0807e;left:674.00px;letter-spacing:0.214px;">beanDefinition</div>
<div class="t ui" style="top:1423.99px;font-size:26px;color:#bbbbbb;left:851.50px;">=</div>
<div class="t ui" style="top:1423.99px;font-size:26px;color:#808080;left:875.00px;letter-spacing:-0.220px;">{RootBeanDefinition@2037}</div>
<div class="clip" style="left:1200px;top:1418px;width:1550px;height:31px">
<div class="t ui" style="top:5.99px;font-size:26px;color:#bbbbbb;left:4.00px;letter-spacing:-0.155px;">"Root bean: class [org.xiaoge.thinking.in.spring.ioc.dependency.injection.AnnotationDependencyInjectionResolutionDemo$$EnhancerBy</div>
</div>
<div class="t ui" style="top:1423.99px;font-size:26px;color:#5680c2;left:2754.00px;letter-spacing:-1.500px;">...</div>
<div class="t ui" style="top:1423.99px;font-size:26px;color:#5680c2;left:2779.50px;letter-spacing:-0.250px;">View</div>
<div class="t ui" style="top:1463.99px;font-size:26px;color:#f0807e;left:674.00px;letter-spacing:-0.062px;">beanType</div>
<div class="t ui" style="top:1463.99px;font-size:26px;color:#bbbbbb;left:795.50px;">=</div>
<div class="t ui" style="top:1463.99px;font-size:26px;color:#808080;left:819.50px;letter-spacing:-1.042px;">{Class@1911}</div>
<div class="t ui" style="top:1463.99px;font-size:26px;color:#bbbbbb;left:980.50px;letter-spacing:-0.181px;">"class org.xiaoge.thinking.in.spring.ioc.dependency.injection.AnnotationDependencyInjectionResolutionDemo$$EnhancerBySpringCGLIB$$9475d71"</div>
<div class="t ui" style="top:1463.99px;font-size:26px;color:#5680c2;left:2680.50px;letter-spacing:-1.500px;">...</div>
<div class="t ui" style="top:1463.99px;font-size:26px;color:#5680c2;left:2707.50px;letter-spacing:-0.062px;">Navigate</div>
<div class="t ui" style="top:1503.99px;font-size:26px;color:#f0807e;left:674.00px;letter-spacing:-0.125px;">beanName</div>
<div class="t ui" style="top:1503.99px;font-size:26px;color:#bbbbbb;left:809.00px;">=</div>
<div class="t ui" style="top:1503.99px;font-size:26px;color:#6a8759;left:833.00px;letter-spacing:0.056px;">"annotationDependencyInjectionResolutionDemo"</div>
<div class="t ui" style="top:1543.99px;font-size:26px;color:#f0807e;left:674.00px;letter-spacing:0.000px;">metadata</div>
<div class="t ui" style="top:1543.99px;font-size:26px;color:#bbbbbb;left:791.00px;">=</div>
<div class="t ui" style="top:1543.99px;font-size:26px;color:#808080;left:814.00px;letter-spacing:-0.083px;">{InjectionMetadata@2194}</div>
<div style="left:598px;top:1602px;width:984px;height:15.5px;background:#595b5d;"></div>
<div style="left:0px;top:1620px;width:2880px;height:1.5px;background:#323232;"></div>
<div style="left:0px;top:1621.5px;width:2880px;height:43px;background:#3c3f41;"></div>
<div style="left:170.5px;top:1621.5px;width:170.5px;height:42.5px;background:#2d2f30;"></div>
<svg style="left:65px;top:1633px;" width="23" height="24" viewBox="0 0 23 24"><path d="M2.500 0v23" stroke="#afb1b3" stroke-width="4.4"/><path d="M3 16h11.500V8" fill="none" stroke="#afb1b3" stroke-width="4"/><polygon points="7,9.500 14.500,1 22,9.500" fill="#afb1b3"/></svg>
<div class="t ui" style="top:1634.53px;font-size:23px;color:#bbbbbb;left:95.50px;letter-spacing:0.167px;"><u>9</u>: Git</div>
<svg style="left:194px;top:1630px;" width="26" height="28" viewBox="0 0 26 28"><ellipse cx="12" cy="16" rx="8" ry="10" fill="#afb1b3"/><path d="M6.500 2l4 5h3l4-5M0 11h24M0 17h24M1 23.500h22" fill="none" stroke="#afb1b3" stroke-width="2.4"/><circle cx="21" cy="23" r="5" fill="#2d2f30"/><circle cx="21" cy="23" r="3.600" fill="#00e000"/></svg>
<div class="t ui" style="top:1634.53px;font-size:23px;color:#ffffff;left:226.00px;letter-spacing:0.375px;"><u>5</u>: Debug</div>
<svg style="left:367px;top:1634px;" width="22" height="19" viewBox="0 0 22 19"><path d="M0 2h4M0 9.500h4M0 17h4" stroke="#afb1b3" stroke-width="3.4"/><path d="M7 2h14M7 9.500h14M7 17h14" stroke="#afb1b3" stroke-width="3.4"/></svg>
<div class="t ui" style="top:1634.53px;font-size:23px;color:#bbbbbb;left:397.50px;letter-spacing:0.143px;"><u>6</u>: TODO</div>
<svg style="left:530px;top:1631px;" width="26" height="24" viewBox="0 0 26 24"><path d="M1 17C1 7 9 4 24 1c1 12-5 20-15 20-3 0-5-1-8-4z" fill="#afb1b3"/><path d="M3 20c4-7 10-10 15-12" stroke="#3c3f41" stroke-width="1.500" fill="none"/></svg>
<div class="t ui" style="top:1634.53px;font-size:23px;color:#bbbbbb;left:563.50px;letter-spacing:0.583px;">Spring</div>
<svg style="left:677px;top:1633px;" width="24" height="21" viewBox="0 0 24 21"><rect width="23" height="20" fill="#afb1b3"/><path d="M4 5l5 4.500-5 4.500M11 15h7" fill="none" stroke="#3c3f41" stroke-width="2.2"/></svg>
<div class="t ui" style="top:1634.53px;font-size:23px;color:#bbbbbb;left:710.00px;letter-spacing:0.562px;">Terminal</div>
<svg style="left:2682px;top:1630px;" width="28" height="28" viewBox="0 0 28 28"><circle cx="13" cy="13" r="11" fill="none" stroke="#afb1b3" stroke-width="3"/><path d="M5 21l-3 6 8-3" fill="#afb1b3"/></svg>
<div class="t ui" style="top:1634.53px;font-size:23px;color:#bbbbbb;left:2716.00px;letter-spacing:0.000px;">Event Log</div>
<div style="left:0px;top:1664.5px;width:2880px;height:1.5px;background:#323232;"></div>
<div style="left:0px;top:1666px;width:2880px;height:40px;background:#3c3f41;"></div>
<svg style="left:11px;top:1673px;" width="27" height="26" viewBox="0 0 27 26"><rect x="6" y="1.500" width="19" height="18.500" fill="none" stroke="#afb1b3" stroke-width="2.2"/><path d="M2 5.500V24h18.500" fill="none" stroke="#afb1b3" stroke-width="2.2"/></svg>
<div class="t ui" style="top:1671.99px;font-size:26px;color:#bbbbbb;left:54.00px;letter-spacing:0.025px;">All files are up-to-date (8 minutes ago)</div>
<div class="t ui" style="top:1671.99px;font-size:26px;color:#bbbbbb;left:2350.00px;letter-spacing:-1.000px;">247:1</div>
<div class="t ui" style="top:1671.99px;font-size:26px;color:#8c8c8c;left:2436.50px;letter-spacing:-2.750px;">LF</div>
<div class="t ui" style="top:1671.99px;font-size:26px;color:#8c8c8c;left:2486.50px;letter-spacing:-1.600px;">UTF-8</div>
<div style="left:0px;top:1704.5px;width:2880px;height:1.5px;background:#6e7072;"></div>
<div style="left:2560px;top:1652.500px;width:318px;height:51.5px;background:#fdfeff;border:1.5px solid #b9c9e4;border-radius:7px;box-sizing:border-box"></div>
<div style="left:2838px;top:1660px;width:36px;height:40px;background:linear-gradient(135deg,#fff8d8,#e6f7ff 60%,#e8e0ff);border-radius:4px"></div>
<svg style="left:2516px;top:1638px;" width="78" height="70" viewBox="0 0 78 70"><defs><linearGradient id="sg" x1="0" y1="0" x2="0.300" y2="1"><stop offset="0" stop-color="#f7713f"/><stop offset="1" stop-color="#ee440f"/></linearGradient></defs>
<g transform="rotate(-17 40 36)"><rect x="13" y="10" width="54" height="52" rx="8" fill="url(#sg)"/></g>
<text x="0" y="0" text-anchor="middle" font-family="Liberation Sans,sans-serif" font-weight="bold" font-style="italic" font-size="58" fill="#fff" transform="translate(40 54) rotate(-6) scale(1.320 0.860)">S</text></svg>
<div class="t cjk" style="top:1664.11px;font-size:30px;color:#0a6fdc;left:2599.50px;font-weight:bold;">中</div>
<svg style="left:2650px;top:1666px;" width="28" height="28" viewBox="0 0 28 28"><circle cx="6.500" cy="6.500" r="4" fill="#0a6fdc"/><circle cx="20.500" cy="14" r="3.6" fill="#0a6fdc"/><path d="M22.500 14c1.500 5-2 9-6 10" fill="none" stroke="#0a6fdc" stroke-width="3"/></svg>
<svg style="left:2698px;top:1662px;" width="26" height="33" viewBox="0 0 26 33"><rect x="7.500" y="1" width="11" height="20" rx="5.500" fill="#0a6fdc"/><path d="M2.500 14c0 14 21 14 21 0" fill="none" stroke="#0a6fdc" stroke-width="2.8"/><path d="M13 25v5M8 30.500h10" stroke="#0a6fdc" stroke-width="2.8"/></svg>
<svg style="left:2744px;top:1666px;" width="31" height="25" viewBox="0 0 31 25"><rect x="1.500" y="1.5" width="28" height="21.500" rx="3" fill="#0a6fdc"/><path d="M5 7.500h21M5 12.500h21" stroke="#fff" stroke-width="2.600" stroke-dasharray="3.400 2.500"/><path d="M9 18h13" stroke="#fff" stroke-width="2.600"/></svg>
<svg style="left:2792px;top:1664px;" width="31" height="28" viewBox="0 0 31 28"><path d="M9 1c3 4 10 4 13 0l8 5-4 7-3-2v16H8V11l-3 2-4-7z" fill="#0a6fdc"/></svg>
<svg style="left:2842px;top:1665px;" width="27" height="27" viewBox="0 0 27 27"><defs><linearGradient id="gg" x1="0" y1="0" x2="1" y2="1"><stop offset="0" stop-color="#8068ee"/><stop offset="1" stop-color="#3f72f6"/></linearGradient></defs><rect x="0.500" y="0.5" width="11.500" height="11.500" rx="3.500" fill="url(#gg)"/><rect x="14.500" y="0.5" width="11.500" height="11.500" rx="3.500" fill="url(#gg)"/><rect x="18" y="4" width="4.500" height="4.500" fill="#fff"/><rect x="0.500" y="14.500" width="11.500" height="11.500" rx="3.500" fill="url(#gg)"/><rect x="14.500" y="14.500" width="11.500" height="11.500" rx="3.500" fill="url(#gg)"/></svg>
<div class="t cjk" style="top:1679.42px;font-size:19px;color:rgba(120,120,120,0.85);left:2654.00px;letter-spacing:-0.077px;text-shadow:0 0 2px #fff,0 0 2px #fff;">CSDN @只因为你而温柔</div>
</body></html>
